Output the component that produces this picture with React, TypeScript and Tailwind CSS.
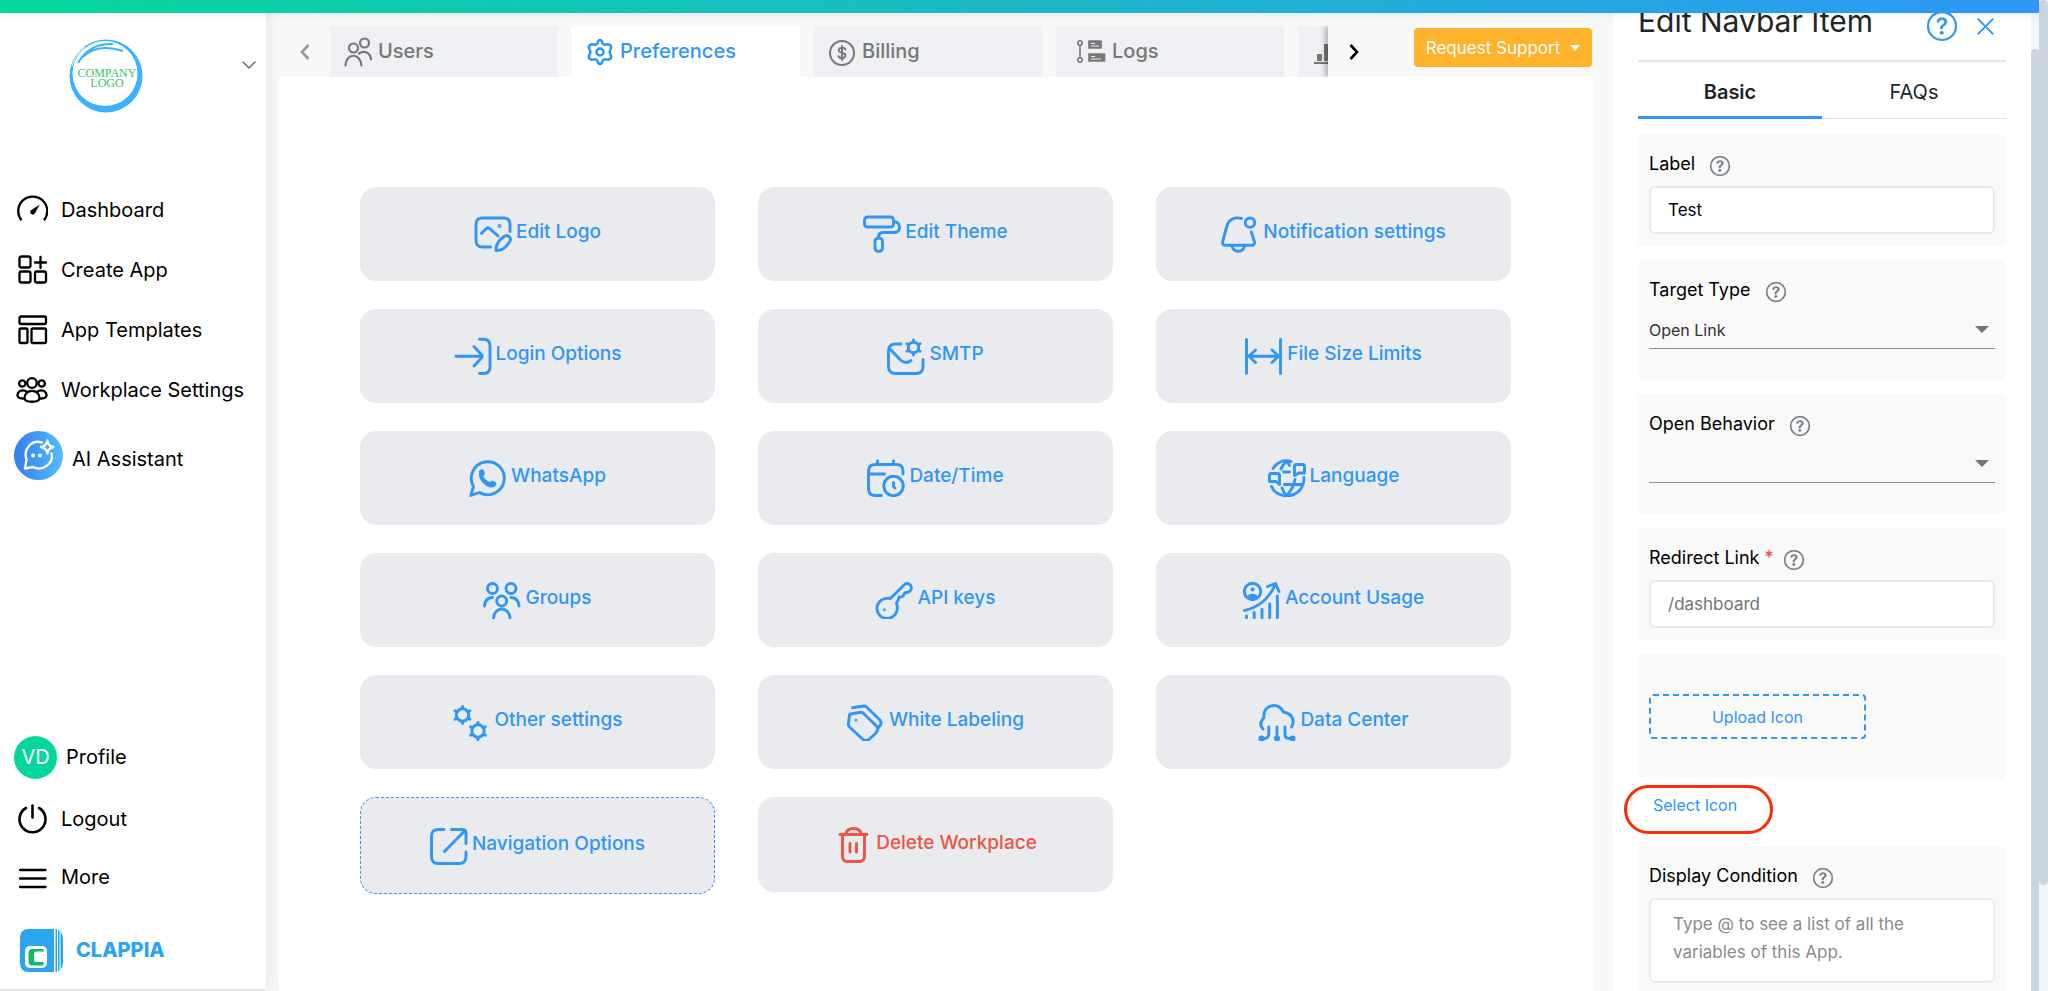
import { useState } from 'react'
import type { ReactNode } from 'react'
import { BsChevronDown, BsQuestionCircle, BsXLg } from 'react-icons/bs'

interface IconProps {
  children: ReactNode
}

function CardIcon({ children }: IconProps) {
  return (
    <svg
      viewBox="0 0 38 38"
      className="size-[38px] shrink-0"
      fill="none"
      stroke="currentColor"
      strokeWidth="2.9"
      strokeLinecap="round"
      strokeLinejoin="round"
    >
      {children}
    </svg>
  )
}

function NavIcon({ children }: IconProps) {
  return (
    <svg
      viewBox="0 0 32 32"
      className="size-8 shrink-0"
      fill="none"
      stroke="currentColor"
      strokeWidth="2.3"
      strokeLinecap="round"
      strokeLinejoin="round"
    >
      {children}
    </svg>
  )
}

// small six-spoked cog used by the SMTP and Other settings cards
function Cog({ x, y, r }: { x: number; y: number; r: number }) {
  return (
    <g transform={`translate(${x} ${y})`}>
      <circle r={r} />
      {[0, 60, 120, 180, 240, 300].map((angle) => (
        <path key={angle} d={`M0 ${-r - 1}V${-r - 2.4}`} transform={`rotate(${angle})`} />
      ))}
    </g>
  )
}

const settings: { label: string; icon: ReactNode; variant?: 'active' | 'danger' }[] = [
  {
    label: 'Edit Logo',
    icon: (
      <>
        <path d="M36 16.5V9.5Q36 3 29.500 3H8.500Q2 3 2 9.500V25.500Q2 32 8.500 32H16.500" />
        <path d="M7.500 18.500l4.500-4.700q2-2 4 0L24 21" />
        <circle cx="25.500" cy="11" r="0.600" fill="currentColor" />
        <path d="M22 35.500C21.500 30 24 26 30 21.500C34.500 19 38 23 35.500 27C31 33.500 28 35.500 22 35.500z" />
      </>
    ),
  },
  {
    label: 'Edit Theme',
    icon: (
      <>
        <rect x="1.500" y="2" width="29" height="10" rx="3" />
        <path d="M31 6.500q5.500.500 5.500 6 0 5-5.500 5H20q-4.500 0-4.500 5" />
        <rect x="12" y="23" width="7.500" height="13.500" rx="3.500" />
      </>
    ),
  },
  {
    label: 'Notification settings',
    icon: (
      <>
        <path d="M20.500 3.500C13 1.500 7.500 5 6 10.500L1.700 26.500Q1 30.300 4.500 30.300H30.500Q34 30.300 33.400 26.500L30.300 17" />
        <path d="M11 31c1.500 7 11 7 12.500 0" />
        <circle cx="29" cy="7.700" r="4.700" />
      </>
    ),
  },
  {
    label: 'Login Options',
    icon: (
      <>
        <path d="M2 19.300H27" />
        <path d="M20 9.500l7.500 8.200q1.400 1.600 0 3.200L20 29" />
        <path d="M25.500 2.300h4q6.500 0 6.500 6.500V30q0 6.500-6.500 6.500h-4" />
      </>
    ),
  },
  {
    label: 'SMTP',
    icon: (
      <>
        <path d="M14 7H9Q1.500 7 1.500 14V29.500Q1.500 36.500 9 36.500H29Q36 36.500 36 29.500V22.500" />
        <path d="M3 12L13.500 23Q18.500 27.500 24 23.500" />
        <Cog x={26.5} y={10.5} r={5.2} />
      </>
    ),
  },
  {
    label: 'File Size Limits',
    icon: (
      <>
        <path d="M1.500 2.500V36.500M35.500 2.500V36.500M4 19.300H33" />
        <path d="M10.500 13L4 19.300L10.500 25.500M27 13L33.500 19.300L27 25.500" />
      </>
    ),
  },
  {
    label: 'WhatsApp',
    icon: (
      <>
        <path d="M1.800 36.500L4.500 27.500A16.500 16.500 0 1 1 10.500 33.500z" />
        <path
          d="M10.500 12.500q1.500-3.500 4-1l1 3.500-1.500 2.500q2.500 4.500 7 6l2.500-1.500 3 1.500q1.500 1.500-1 4-6.500 2.500-12.500-5-4-5.500-2.500-10z"
          fill="currentColor"
          strokeWidth="0.800"
        />
      </>
    ),
  },
  {
    label: 'Date/Time',
    icon: (
      <>
        <path d="M36 15V12Q36 5.500 29.500 5.500H8.500Q1.500 5.500 1.500 12.500V29.500Q1.500 36.500 8.500 36.500H14.500" />
        <path d="M2 15H17.500M10.500 2V5M26.500 2V5" />
        <circle cx="26.500" cy="27" r="9.700" />
        <path d="M26.500 23.500V27.500L28 29" />
      </>
    ),
  },
  {
    label: 'Language',
    icon: (
      <>
        <path d="M5 9.500C9 3 16 .500 23 2.500M36 18.500C36 40 10 42 3.500 27.500" />
        <path d="M26.500 16.500V7.500q0-2 2-2H34.500q2 0 2 2v6.500H31z" />
        <path d="M1.500 22.500V16.500q0-2 2-2H9.500q2 0 2 2V25.500l-3.500-3z" />
        <path d="M18 3q-3.500 3-5 7M19.500 3l2 3.500M15.500 13H21.500M16.500 25.500H34M14 29q2 5 4.500 7.500 7-7 8.500-16" />
      </>
    ),
  },
  {
    label: 'Groups',
    icon: (
      <>
        <circle cx="9.500" cy="7.500" r="5" />
        <circle cx="28" cy="7.500" r="5" />
        <circle cx="18.700" cy="20" r="5" />
        <path d="M1.500 25q.500-8 8-8.500M36 25q-.500-8-8-8.500M10.500 37c1-12 15.500-12 16.500 0" />
      </>
    ),
  },
  {
    label: 'API keys',
    icon: (
      <>
        <path d="M15.500 17.500L28.500 4.500C33 0 39 5 35 10q-1.200 1.500-4 1.500-2 .500-2.500 3-1.500 2-4.500 1.500-.500 4-2.500 6C24.500 31 19 37.500 11.500 37.500A10 10 0 0 1 10 17.700Q13 17 15.500 17.500z" />
        <circle cx="9.300" cy="28.800" r="0.500" fill="currentColor" strokeWidth="2" />
      </>
    ),
  },
  {
    label: 'Account Usage',
    icon: (
      <>
        <circle cx="9.500" cy="10.500" r="8.200" />
        <circle cx="9.500" cy="8.500" r="1" fill="currentColor" strokeWidth="2" />
        <path d="M5.500 16.500q0-3 4-3t4 3q-4 2-8 0z" fill="currentColor" strokeWidth="1.500" />
        <path d="M1.500 29.500C15 26.500 26 18 32.500 3M24.500 5.500L32.500 2.500L36 10.500" />
        <path d="M3.500 35V36.700M11.200 31.500V36.700M19 28.500V36.700M26.700 23V36.700M34.400 15V36.700" />
      </>
    ),
  },
  {
    label: 'Other settings',
    icon: (
      <>
        <Cog x={10.5} y={12} r={6.2} />
        <Cog x={26} y={28} r={6.2} />
      </>
    ),
  },
  {
    label: 'White Labeling',
    icon: (
      <>
        <path d="M2.700 11.200L13.500 9.300q1.500-.300 2.500.700L31 24.500q-.500 4-2.500 6L22.500 36q-3.500 3-7 0L2.500 24q-1.300-1.500-1.200-3z" />
        <path d="M5.500 4.700L17 3q1.500 0 2.500 1L32.500 16.500q2.500 3 1 5.500L31 25" />
        <circle cx="9" cy="17" r="0.500" fill="currentColor" strokeWidth="2" />
      </>
    ),
  },
  {
    label: 'Data Center',
    icon: (
      <>
        <path d="M5 26q-5-5 1-11.500C5 6 11 2.500 16 2.500q6 0 9.500 6.500 8.500 1.500 9.500 8.500.500 3.500-1.500 6.500" />
        <path d="M10.800 24V31q0 4-4 4.500H4M19 24V34M27 24V31q0 4.500 4 4.500H34" />
        <circle cx="3.500" cy="35.500" r="1.600" fill="currentColor" />
        <circle cx="19" cy="35.500" r="1.600" fill="currentColor" />
        <circle cx="34.500" cy="35.500" r="1.600" fill="currentColor" />
      </>
    ),
  },
  {
    label: 'Navigation Options',
    variant: 'active',
    icon: (
      <>
        <path d="M14 2.500H8.500Q1.500 2.500 1.500 9V29.500Q1.500 36.500 8.500 36.500H29Q36 36.500 36 29.500V25" />
        <path d="M21.500 2.500H32.500Q36 2.500 36 6V16.500M14.500 24.500L35 3.500" />
      </>
    ),
  },
  {
    label: 'Delete Workplace',
    variant: 'danger',
    icon: (
      <>
        <path d="M6 8.500H33M12 7.500q1-5 7.500-5t7.500 5" />
        <path d="M8.500 9.500V30q0 5.500 5 5.500H25.500q5 0 5-5.500V9.500M16 17.500V26M22.500 17.500V26" />
      </>
    ),
  },
]

const tabs: { id: string; label?: string; icon: ReactNode }[] = [
  {
    id: 'users',
    label: 'Users',
    icon: (
      <svg viewBox="0 0 28 30" className="h-[30px] w-7 shrink-0" fill="none" stroke="currentColor" strokeWidth="2.200" strokeLinecap="round">
        <circle cx="9.500" cy="11" r="4.500" />
        <circle cx="20.500" cy="6" r="4.500" />
        <path d="M1.500 28.500c.500-13 15-13 16 0M15 16.500c5-3.500 11.500-1 12 6" />
      </svg>
    ),
  },
  {
    id: 'preferences',
    label: 'Preferences',
    icon: (
      <svg viewBox="0 0 28 30" className="h-[30px] w-7 shrink-0" fill="none" stroke="currentColor" strokeWidth="2.500" strokeLinejoin="round">
        <path d="M14 3q2 0 2.500 3.500l2.500 1.500q3-1.500 5 0t.500 4.500l-1 2.500 1 2.500q1.500 3-.500 4.500t-5 0l-2.500 1.500Q16 27 14 27t-2.500-3.500L9 22q-3 1.500-5 0t-.500-4.500l1-2.500-1-2.500Q2 9.500 4 8t5 0l2.500-1.500Q12 3 14 3z" />
        <circle cx="14" cy="15" r="3.500" />
      </svg>
    ),
  },
  {
    id: 'billing',
    label: 'Billing',
    icon: (
      <svg viewBox="0 0 28 30" className="h-[30px] w-7 shrink-0" fill="none" stroke="currentColor" strokeWidth="2" strokeLinecap="round">
        <circle cx="14" cy="16" r="12" />
        <path d="M17.500 12.500q-1-1.800-3.500-1.800t-3.300 2q-.500 2.300 3.300 3.100t3.300 3.200q-.800 2.200-3.300 2.200t-3.500-2M14 9V23" />
      </svg>
    ),
  },
  {
    id: 'logs',
    label: 'Logs',
    icon: (
      <svg viewBox="0 0 36 30" className="h-[30px] w-9 shrink-0" fill="none" stroke="currentColor" strokeWidth="1.600">
        <circle cx="10" cy="6" r="2.200" />
        <circle cx="10" cy="23" r="2.200" />
        <path d="M10 8.500V20.500" />
        <path d="M19 4H31V11H19zM19 17H34.500V24H19z" fill="currentColor" />
        <path d="M21 6.500H25M21 9H29M21 19.500H25M21 22H31" stroke="#eff0f3" strokeWidth="1" />
      </svg>
    ),
  },
  {
    id: 'analytics',
    icon: (
      <svg viewBox="0 0 28 30" className="h-[30px] w-7 shrink-0" fill="currentColor">
        <path d="M2 25h26v2H2zM5 17h5v7H5zM12 7h6v17h-6zM20 11h5v13h-5z" />
      </svg>
    ),
  },
]

const navItems: { label: string; icon: ReactNode }[] = [
  {
    label: 'Dashboard',
    icon: (
      <>
        <path d="M5.500 26.200A14.500 14.500 0 1 1 28 26.200" strokeLinecap="butt" />
        <path d="M23 11.500L18.800 19a2.300 2.300 0 1 1-3.600-2.700z" fill="currentColor" strokeWidth="0.500" />
      </>
    ),
  },
  {
    label: 'Create App',
    icon: (
      <>
        <rect x="3.500" y="2.500" width="11" height="11" rx="2" />
        <rect x="3.500" y="17.500" width="11" height="11" rx="2" />
        <rect x="19" y="17.500" width="11" height="11" rx="2" />
        <path d="M24.500 3V14M19 8.500H30" />
      </>
    ),
  },
  {
    label: 'App Templates',
    icon: (
      <>
        <rect x="3.500" y="2.500" width="26.500" height="7.500" rx="1.500" />
        <rect x="3.500" y="14.500" width="8" height="14.500" rx="1.500" />
        <rect x="15.500" y="14.500" width="14.500" height="14.500" rx="1.500" />
      </>
    ),
  },
  {
    label: 'Workplace Settings',
    icon: (
      <>
        <circle cx="16" cy="9" r="4.800" />
        <circle cx="6.300" cy="9.500" r="3.200" />
        <circle cx="25.700" cy="9.500" r="3.200" />
        <path d="M8.500 24c0-9.500 15-9.500 15 0 0 5-15 5-15 0zM8 24.500q-6.500 0-6.500-3c0-4 4-6.500 9-4M24 24.500q6.500 0 6.500-3c0-4-4-6.500-9-4" />
      </>
    ),
  },
]

function Sidebar() {
  return (
    <nav className="relative z-10 flex w-[266px] shrink-0 flex-col border-b-2 border-[#e6e6e6] bg-white shadow-[2px_0_12px_rgba(0,0,0,0.08)]">
      <div className="flex h-[180px] items-start justify-between pt-[39px] pr-[9px] pl-[69px]">
        <svg viewBox="0 0 74 74" className="size-[74px]" fill="none" stroke="#3bb2ff">
          <path
            d="M37 .500a36.500 36.500 0 1 1 0 73a36.500 36.500 0 1 1 0-73zM36 2a32.500 32.500 0 1 0 0 65a32.500 32.500 0 1 0 0-65z"
            fill="#3bb2ff"
            fillRule="evenodd"
            stroke="none"
          />
          <path d="M9 24Q20 4 44 5M14 18Q28 4 54 12" strokeWidth="2" />
          <path d="M3 27Q7 14 16 8" stroke="#fff" strokeWidth="1" />
          <g fill="#35c56a" stroke="none" fontFamily="'Liberation Serif', serif" fontSize="12" textAnchor="middle">
            <text x="38" y="38">COMPANY</text>
            <text x="38" y="48">LOGO</text>
          </g>
        </svg>
        <button type="button" aria-label="Switch workplace" className="mt-[18px] text-[#5f6b76]">
          <BsChevronDown size={16} stroke="currentColor" strokeWidth={0.6} />
        </button>
      </div>

      {navItems.map((item) => (
        <a key={item.label} href="#" className="flex h-[60px] items-center gap-[13px] pl-4">
          <NavIcon>{item.icon}</NavIcon>
          {item.label}
        </a>
      ))}
      <a href="#" className="flex h-[70px] items-center gap-[9px] pl-[14px]">
        <span className="flex size-[49px] items-center justify-center rounded-full bg-linear-to-r from-[#357df0] to-[#55bcfb] text-white">
          <NavIcon>
            <path d="M19 3.500C8 0 0 11 3.500 20.500L2 29.500L10 28C20 33 31 24 28.500 14.500" />
            <path d="M24.500 1.500q.500 5.500 6 6.500-5.500 1-6 6.500-1-5.500-6.500-6.500 5.500-1 6.500-6.500z" />
            <path d="M10 16.500h.100M17 16.500h.100" strokeWidth="4" />
          </NavIcon>
        </span>
        <span className="pt-2">AI Assistant</span>
      </a>

      {/* Account links */}
      <a href="#" className="mt-auto flex h-[60px] items-center gap-[9px] pl-[14px]">
        <span className="flex size-[43px] items-center justify-center rounded-full bg-[#05d69b] text-white">VD</span>
        Profile
      </a>
      <a href="#" className="flex h-16 items-center gap-[13px] pl-4">
        <NavIcon>
          <path d="M16.500 2.500V14.500M10 5A13 13 0 1 0 23 5" strokeWidth="2.600" />
        </NavIcon>
        Logout
      </a>
      <a href="#" className="flex h-[52px] items-center gap-[13px] pl-4">
        <NavIcon>
          <path d="M4 9H29.500M4 17.500H29.500M4 26H29.500" />
        </NavIcon>
        More
      </a>
      <a href="#" className="flex h-[86px] items-center gap-[13px] pt-2 pl-5 font-extrabold text-[#2ba6ee]">
        <svg viewBox="0 0 43 43" className="size-[43px]">
          <path d="M34 0H9Q0 0 0 9V34Q0 43 9 43H34zM35.500 0h1.500V43h-1.500zM38 1h1.500V42H38zM40.500 2.500Q43 5 43 9V34Q43 38 40.500 40.500z" fill="#2ba6ee" />
          <rect x="5" y="17" width="22" height="22" rx="5" fill="#fff" />
          <path d="M23.500 23V20H12Q8.500 20 8.500 24V32Q8.500 36.500 12 36.500H23.500V33H16Q14 33 14 31V25Q14 22.500 16 22.500H22z" fill="#12b76a" />
        </svg>
        CLAPPIA
      </a>
    </nav>
  )
}

function FieldLabel({ id, text, required }: { id: string; text: string; required?: boolean }) {
  return (
    <div className={required ? 'flex h-7 items-center gap-2.5' : 'flex h-7 items-center gap-[15px]'}>
      <label htmlFor={id} className="text-[18px] leading-7 text-black">
        {text}
        {required && <span className="text-[#f44336]"> *</span>}
      </label>
      <button type="button" aria-label="Help" className="pt-1 text-[#6c757d]">
        <BsQuestionCircle size={20} stroke="currentColor" strokeWidth={0.3} />
      </button>
    </div>
  )
}

function SelectField({ id, label, options }: { id: string; label: string; options: string[] }) {
  return (
    <div className="h-[120px] rounded-md bg-[#f9f9f9] px-[11px] pt-4">
      <FieldLabel id={id} text={label} />
      <div className="relative mt-2 border-b border-[#8c8c8c]">
        <select id={id} className="block h-9 w-full appearance-none bg-transparent text-[16px] text-[#333]">
          {options.map((option) => (
            <option key={option}>{option}</option>
          ))}
        </select>
        <svg viewBox="0 0 14 7" className="pointer-events-none absolute top-[14px] right-1.5 h-[7px] w-3.5" fill="#757575">
          <path d="M0 0H14L7 7z" />
        </svg>
      </div>
    </div>
  )
}

function EditPanel() {
  const [label, setLabel] = useState('Test')

  return (
    <aside className="flex w-[426px] shrink-0 bg-white">
      <div className="flex-1 overflow-hidden px-[25px] pt-[3px]">
        <div className="flex h-[59px] items-start justify-between border-b-2 border-[#e3e5e8]">
          <h2 className="text-[30px] leading-9 text-[#212529]">Edit Navbar Item</h2>
          <div className="flex items-center gap-[18px] pt-2 pr-2.5 text-[#2f96f6]">
            <button type="button" aria-label="Help">
              <BsQuestionCircle size={30} stroke="currentColor" strokeWidth={0.2} />
            </button>
            <button type="button" aria-label="Close">
              <BsXLg size={21} stroke="currentColor" strokeWidth={0.5} />
            </button>
          </div>
        </div>

        <div className="flex h-[57px] text-[#212529]">
          <button type="button" className="flex-1 border-b-[3px] border-[#2f96f6] pt-1.5 font-semibold">
            Basic
          </button>
          <button type="button" className="flex-1 border-b border-[#dee2e6] pt-1">
            FAQs
          </button>
        </div>

        <form className="mt-[15px] flex flex-col gap-[14px]">
          <div className="rounded-md bg-[#f9f9f9] px-[11px] pt-4 pb-3">
            <FieldLabel id="label" text="Label" />
            <input
              id="label"
              value={label}
              onChange={(e) => setLabel(e.target.value)}
              className="mt-2 block h-12 w-full rounded-md border-2 border-[#e9e9e9] bg-white px-[17px] text-[17px] text-black"
            />
          </div>
          <SelectField id="target-type" label="Target Type" options={['Open Link']} />
          <SelectField id="open-behavior" label="Open Behavior" options={['']} />
          <div className="rounded-md bg-[#f9f9f9] px-[11px] pt-4 pb-3">
            <FieldLabel id="redirect-link" text="Redirect Link" required />
            <input
              id="redirect-link"
              placeholder="/dashboard"
              className="mt-2 block h-12 w-full rounded-md border-2 border-[#e9e9e9] bg-white px-[17px] text-[17px] placeholder:text-[#6c757d]"
            />
          </div>
          <div className="rounded-md bg-[#f9f9f9] px-[11px] py-10">
            <button
              type="button"
              className="block h-[45px] w-[217px] rounded border-2 border-dashed border-[#2f96f6] text-[16px] text-[#2f96f6]"
            >
              Upload Icon
            </button>
          </div>
          <div className="relative -mt-2 flex h-[47px] items-start px-[15px] pt-2 text-[16px] leading-6">
            <button type="button" className="text-[#2f96f6]">
              Select Icon
            </button>
            <span className="pointer-events-none absolute top-0 -left-3.5 h-[49px] w-[149px] rounded-full border-[3px] border-[#fb2c06]" />
          </div>
          <div className="rounded-md bg-[#f9f9f9] px-[11px] pt-4 pb-3">
            <FieldLabel id="display-condition" text="Display Condition" />
            <textarea
              id="display-condition"
              placeholder="Type @ to see a list of all the variables of this App."
              className="mt-2 block h-[85px] w-full resize-none rounded-md border-2 border-[#ececec] bg-white px-[22px] py-2.5 text-[17px] leading-7 placeholder:text-[#8a8a8a]"
            />
          </div>
        </form>
      </div>

      {/* Panel scroll track */}
      <div className="flex w-2 flex-col bg-[#f1f5f8] pt-[49px]">
        <div className="flex-1 rounded-t-full bg-[#cbd5e1]" />
      </div>
    </aside>
  )
}

export default function App() {
  const [activeTab, setActiveTab] = useState('preferences')

  return (
    <div className="flex h-screen overflow-hidden bg-white font-['Inter',sans-serif] text-[20px] leading-7 text-black">
      <div className="relative flex min-w-0 flex-1">
        <div className="absolute inset-x-0 top-0 z-20 h-[13px] bg-linear-to-r from-[#07d79b] via-[#1cb8c6] to-[#2f96f6] shadow-[0_2px_6px_rgba(0,0,0,0.08)]" />
        <Sidebar />

        <main className="flex min-w-0 flex-1 flex-col bg-[#f8f8f8] pl-[13px]">
          {/* Tab strip */}
          <div className="flex h-[77px] items-end">
            <button type="button" aria-label="Previous tabs" className="flex h-[51px] w-[51px] items-center justify-center text-[#999]">
              <svg viewBox="0 0 10 16" className="h-4 w-2.5" fill="none" stroke="currentColor" strokeWidth="2.600">
                <path d="M8.500 1L2 8L8.500 15" />
              </svg>
            </button>
            <div className="flex min-w-0 flex-1 gap-[14px] overflow-hidden">
              {tabs.map((tab) => (
                <button
                  key={tab.id}
                  type="button"
                  aria-label={tab.id}
                  onClick={() => setActiveTab(tab.id)}
                  className={
                    tab.id === activeTab
                      ? 'flex h-[51px] w-[228px] shrink-0 items-center gap-1.5 bg-white px-[14px] font-medium text-[#2f96f6]'
                      : 'flex h-[51px] w-[228px] shrink-0 items-center gap-1.5 bg-[#eff0f3] px-[14px] font-medium text-[#777]'
                  }
                >
                  {tab.icon}
                  {tab.label && <span className="pb-0.5">{tab.label}</span>}
                </button>
              ))}
            </div>
            <button
              type="button"
              aria-label="Next tabs"
              className="flex h-[51px] w-[52px] items-center justify-center text-black shadow-[-3px_0_5px_rgba(0,0,0,0.25)] [clip-path:inset(0_0_0_-10px)]"
            >
              <svg viewBox="0 0 10 16" className="h-4 w-2.5" fill="none" stroke="currentColor" strokeWidth="2.600">
                <path d="M1.500 1L8 8L1.500 15" />
              </svg>
            </button>
            <button
              type="button"
              className="mr-[21px] mb-[10px] ml-[34px] flex h-[39px] w-[178px] items-center justify-center gap-[10px] rounded bg-[#ffb22b] text-[17px] text-white"
            >
              Request Support
              <svg viewBox="0 0 10 6" className="h-1.5 w-2.5" fill="currentColor">
                <path d="M0 0H10L5 6z" />
              </svg>
            </button>
          </div>

          {/* Preferences */}
          <div className="mr-5 flex-1 bg-white pt-[110px] pr-[82px] pl-[81px]">
            <div className="grid grid-cols-3 items-start gap-x-[43px] gap-y-7">
              {settings.map((setting) => (
                <button
                  key={setting.label}
                  type="button"
                  className={
                    setting.variant === 'active'
                      ? 'flex h-[97px] items-center justify-center gap-1 rounded-2xl border border-dashed border-[#2f96f6] bg-[#eaebef] text-[#2f96f6]'
                      : setting.variant === 'danger'
                        ? 'flex h-[95px] items-center justify-center gap-1 rounded-2xl bg-[#eaebef] text-[#e95645]'
                        : 'flex h-[94px] items-center justify-center gap-1 rounded-2xl bg-[#eaebef] text-[#2f96f6]'
                  }
                >
                  <CardIcon>{setting.icon}</CardIcon>
                  <span className="pb-1 text-[19px] font-medium">{setting.label}</span>
                </button>
              ))}
            </div>
          </div>
        </main>

        <EditPanel />
      </div>

      {/* Window scroll track */}
      <div className="flex w-[9px] shrink-0 flex-col bg-[#f1f5f8] pb-[106px]">
        <div className="flex-1 rounded-full bg-[#cbd5e1]" />
      </div>
    </div>
  )
}
